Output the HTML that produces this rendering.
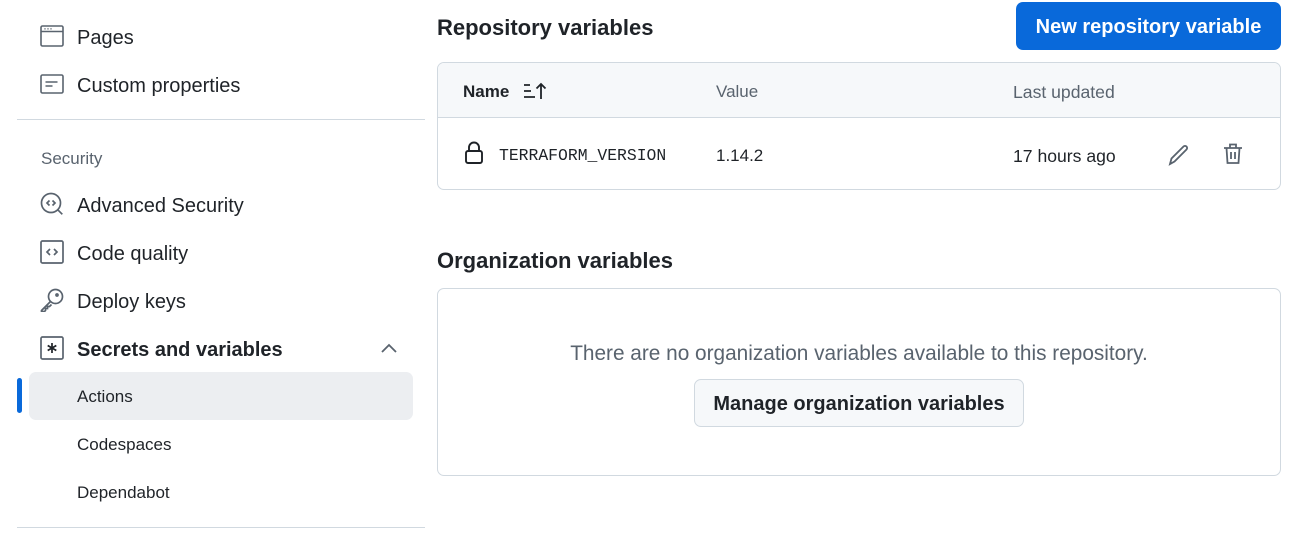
<!DOCTYPE html><html><head><style>
*{box-sizing:border-box;margin:0;padding:0}
body{width:1291px;height:535px;overflow:hidden;background:#fff;font-family:"Liberation Sans",sans-serif;color:#1f2328;position:relative}
.a{position:absolute}
.nav{font-size:20px;left:77px}
.ic{position:absolute;left:40px}
.sub{font-size:17px;left:77px}
.h{font-size:22px;font-weight:bold;left:437px}
.box{border:1px solid #d1d9e0;border-radius:7px;position:absolute}
</style></head><body>
<svg class="ic" style="top:24px" width="24" height="24" viewBox="0 0 24 24" fill="none" stroke="#59636e" stroke-width="1.6"><rect x="1" y="2" width="22" height="20" rx="1.5"/><path d="M1 7.5h22M4.5 4.8h1M7.5 4.8h1M10.5 4.8h1"/></svg>
<div class="a nav" style="top:27px">Pages</div>
<svg class="ic" style="top:72px" width="24" height="24" viewBox="0 0 24 24" fill="none" stroke="#59636e" stroke-width="1.6"><rect x="1" y="3" width="22" height="18" rx="1.5"/><path d="M5.5 10h12M5.5 14h7"/></svg>
<div class="a nav" style="top:75px">Custom properties</div>
<div class="a" style="left:17px;top:119px;width:408px;height:1px;background:#d1d9e0"></div>
<div class="a" style="left:41px;top:149px;font-size:17px;color:#59636e">Security</div>
<svg class="ic" style="top:192px" width="24" height="24" viewBox="0 0 24 24" fill="none" stroke="#59636e" stroke-width="1.7"><circle cx="11" cy="11" r="9.5"/><path d="M17.8 17.8l4.5 4.5M9.5 8.5L7 11l2.5 2.5M12.5 8.5L15 11l-2.5 2.5"/></svg>
<div class="a nav" style="top:195px">Advanced Security</div>
<svg class="ic" style="top:240px" width="24" height="24" viewBox="0 0 24 24" fill="none" stroke="#59636e" stroke-width="1.7"><rect x="1" y="1" width="22" height="22" rx="1.5"/><path d="M10 9l-3 3 3 3M14 9l3 3-3 3"/></svg>
<div class="a nav" style="top:243px">Code quality</div>
<svg class="ic" style="top:288px" width="24" height="24" viewBox="0 0 24 24" fill="none" stroke="#59636e" stroke-width="1.7"><circle cx="15.5" cy="8.5" r="7"/><path d="M10.5 13.5L1.5 22.5v1h3l1-1v-2h2v-2h2l2-2"/><circle cx="17" cy="7" r="1"/></svg>
<div class="a nav" style="top:291px">Deploy keys</div>
<svg class="ic" style="top:336px" width="24" height="24" viewBox="0 0 24 24" fill="none" stroke="#59636e" stroke-width="1.7"><rect x="1" y="1" width="22" height="22" rx="1.5"/><path d="M12 7v10M7.7 9.5l8.6 5M7.7 14.5l8.6-5" stroke="#1f2328"/></svg>
<div class="a nav" style="top:339px;font-weight:bold">Secrets and variables</div>
<svg class="a" style="left:380px;top:342px" width="18" height="14" viewBox="0 0 18 14" fill="none" stroke="#59636e" stroke-width="1.8"><path d="M2 10l7-7 7 7"/></svg>
<div class="a" style="left:29px;top:372px;width:384px;height:48px;background:#eceef1;border-radius:7px"></div>
<div class="a" style="left:17px;top:378px;width:5px;height:35px;background:#0969da;border-radius:3px"></div>
<div class="a sub" style="top:387px">Actions</div>
<div class="a sub" style="top:435px">Codespaces</div>
<div class="a sub" style="top:483px">Dependabot</div>
<div class="a" style="left:17px;top:527px;width:408px;height:1px;background:#d1d9e0"></div>

<div class="a h" style="top:15px">Repository variables</div>
<div class="a" style="left:1016px;top:2px;width:265px;height:48px;background:#0969da;border-radius:7px;color:#fff;font-size:20px;font-weight:bold;text-align:center;line-height:50px">New repository variable</div>
<div class="box" style="left:437px;top:62px;width:844px;height:128px;overflow:hidden">
<div style="height:55px;background:#f6f8fa;border-bottom:1px solid #d1d9e0"></div>
<div class="a" style="left:25px;top:19px;font-size:17px;font-weight:bold">Name</div>
<svg class="a" style="left:85px;top:19px" width="26" height="18" viewBox="0 0 26 18" fill="none" stroke="#1f2328" stroke-width="1.8"><path d="M1 3h6M1 9h7M1 15h11M18 17V2M13.5 6.5L18 2l4.5 4.5"/></svg>
<div class="a" style="left:278px;top:19px;font-size:17px;color:#59636e">Value</div>
<div class="a" style="left:575px;top:19px;font-size:17.6px;color:#59636e">Last updated</div>
<svg class="a" style="left:26px;top:78px" width="20" height="24" viewBox="0 0 20 24" fill="none" stroke="#1f2328" stroke-width="1.9"><rect x="2" y="10" width="16" height="12" rx="2"/><path d="M5 10V6.5a5 5 0 0110 0V10"/></svg>
<div class="a" style="left:61px;top:83px;font-family:'Liberation Mono',monospace;font-size:16.4px">TERRAFORM_VERSION</div>
<div class="a" style="left:278px;top:83px;font-size:17px">1.14.2</div>
<div class="a" style="left:575px;top:83px;font-size:17.6px">17 hours ago</div>
<svg class="a" style="left:729px;top:80px" width="24" height="24" viewBox="0 0 24 24" fill="none" stroke="#59636e" stroke-width="1.8"><path d="M3 21l1.5-5.5L16.5 3.5a2.1 2.1 0 013 3L7.5 18.5z"/></svg>
<svg class="a" style="left:784px;top:79px" width="22" height="24" viewBox="0 0 22 24" fill="none" stroke="#59636e" stroke-width="1.8"><path d="M2 6h18M8 6V2.5h6V6M4.5 6l1 15h11l1-15M9 10v7M13 10v7"/></svg>
</div>

<div class="a h" style="top:248px">Organization variables</div>
<div class="box" style="left:437px;top:288px;width:844px;height:188px"></div>
<div class="a" style="left:437px;top:342px;width:844px;text-align:center;font-size:20.8px;color:#59636e">There are no organization variables available to this repository.</div>
<div class="a" style="left:694px;top:379px;width:330px;height:48px;background:#f6f8fa;border:1px solid #d1d9e0;border-radius:7px;font-size:20px;font-weight:bold;text-align:center;line-height:49px">Manage organization variables</div>
</body></html>
